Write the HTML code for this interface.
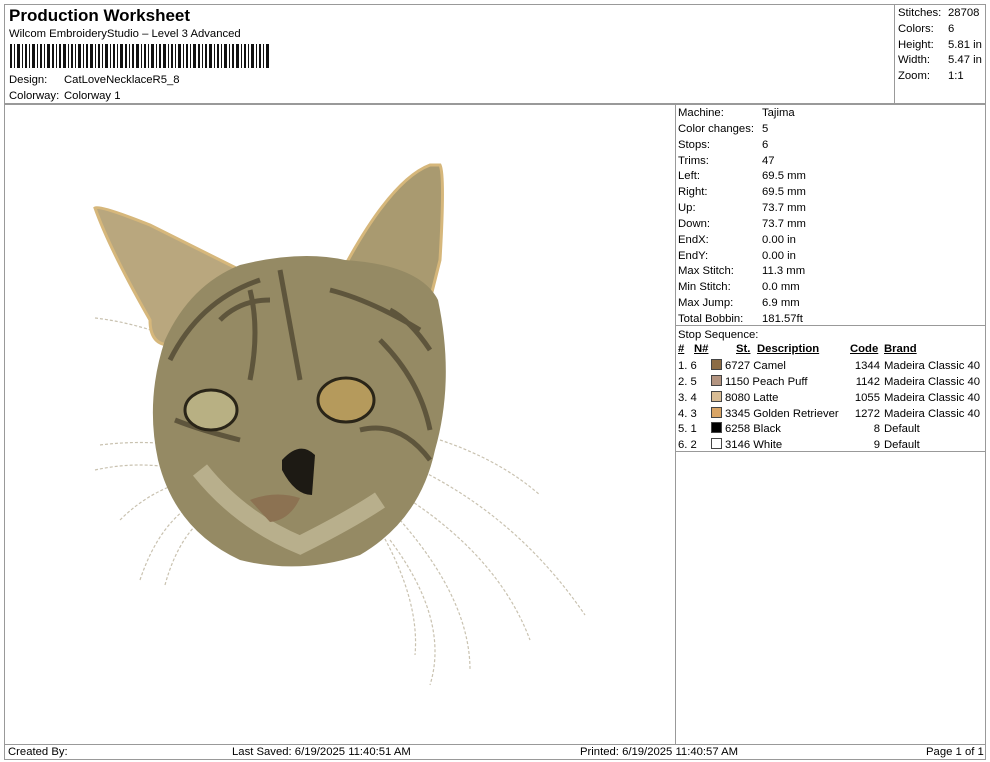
<!DOCTYPE html>
<html><head><meta charset="utf-8"><style>
body{margin:0;width:990px;height:762px;background:#fff;font-family:"Liberation Sans",Arial,sans-serif;font-size:11.3px;color:#000;position:relative;overflow:hidden}
.a{position:absolute;white-space:nowrap}
.l{position:absolute;background:#999}
.sw{display:inline-block;width:9px;height:9px;border:1px solid #444;vertical-align:-1px;margin-right:3px}
</style></head><body>
<div class="l" style="left:4px;top:4px;width:982px;height:1px"></div>
<div class="l" style="left:4px;top:4px;width:1px;height:756px"></div>
<div class="l" style="left:985px;top:4px;width:1px;height:756px"></div>
<div class="l" style="left:4px;top:759px;width:982px;height:1px"></div>
<div class="l" style="left:4px;top:103px;width:982px;height:2px"></div>
<div class="l" style="left:894px;top:4px;width:1px;height:100px"></div>
<div class="l" style="left:675px;top:104px;width:1px;height:640px"></div>
<div class="l" style="left:675px;top:325px;width:311px;height:1px"></div>
<div class="l" style="left:675px;top:451px;width:311px;height:1px"></div>
<div class="l" style="left:4px;top:744px;width:982px;height:1px"></div>

<div class="a" style="left:9px;top:6px;font-size:17px;font-weight:bold">Production Worksheet</div>
<div class="a" style="left:9px;top:28px">Wilcom EmbroideryStudio – Level 3 Advanced</div>
<svg class="a" style="left:10px;top:44px" width="260" height="24">
<g fill="#111">
<rect x="0" width="2" height="24"/><rect x="4" width="1" height="24"/><rect x="7" width="3" height="24"/><rect x="12" width="1" height="24"/><rect x="15" width="2" height="24"/><rect x="19" width="1" height="24"/><rect x="22" width="3" height="24"/><rect x="27" width="1" height="24"/><rect x="30" width="2" height="24"/><rect x="34" width="1" height="24"/><rect x="37" width="3" height="24"/><rect x="42" width="2" height="24"/><rect x="46" width="1" height="24"/><rect x="49" width="2" height="24"/><rect x="53" width="3" height="24"/><rect x="58" width="1" height="24"/><rect x="61" width="2" height="24"/><rect x="65" width="1" height="24"/><rect x="68" width="3" height="24"/><rect x="73" width="1" height="24"/><rect x="76" width="2" height="24"/><rect x="80" width="3" height="24"/><rect x="85" width="1" height="24"/><rect x="88" width="2" height="24"/><rect x="92" width="1" height="24"/><rect x="95" width="3" height="24"/><rect x="100" width="1" height="24"/><rect x="103" width="2" height="24"/><rect x="107" width="1" height="24"/><rect x="110" width="3" height="24"/><rect x="115" width="2" height="24"/><rect x="119" width="1" height="24"/><rect x="122" width="2" height="24"/><rect x="126" width="3" height="24"/><rect x="131" width="1" height="24"/><rect x="134" width="2" height="24"/><rect x="138" width="1" height="24"/><rect x="141" width="3" height="24"/><rect x="146" width="1" height="24"/><rect x="149" width="2" height="24"/><rect x="153" width="3" height="24"/><rect x="158" width="1" height="24"/><rect x="161" width="2" height="24"/><rect x="165" width="1" height="24"/><rect x="168" width="3" height="24"/><rect x="173" width="1" height="24"/><rect x="176" width="2" height="24"/><rect x="180" width="1" height="24"/><rect x="183" width="3" height="24"/><rect x="188" width="2" height="24"/><rect x="192" width="1" height="24"/><rect x="195" width="2" height="24"/><rect x="199" width="3" height="24"/><rect x="204" width="1" height="24"/><rect x="207" width="2" height="24"/><rect x="211" width="1" height="24"/><rect x="214" width="3" height="24"/><rect x="219" width="1" height="24"/><rect x="222" width="2" height="24"/><rect x="226" width="3" height="24"/><rect x="231" width="1" height="24"/><rect x="234" width="2" height="24"/><rect x="238" width="1" height="24"/><rect x="241" width="3" height="24"/><rect x="246" width="1" height="24"/><rect x="249" width="2" height="24"/><rect x="253" width="1" height="24"/><rect x="256" width="3" height="24"/>
</g></svg>
<div class="a" style="left:9px;top:74px">Design:</div><div class="a" style="left:64px;top:74px">CatLoveNecklaceR5_8</div>
<div class="a" style="left:9px;top:90px">Colorway:</div><div class="a" style="left:64px;top:90px">Colorway 1</div>

<div class="a" style="left:898px;top:6px;line-height:15.8px">Stitches:<br>Colors:<br>Height:<br>Width:<br>Zoom:</div>
<div class="a" style="left:948px;top:6px;line-height:15.8px">28708<br>6<br>5.81 in<br>5.47 in<br>1:1</div>

<div class="a" style="left:678px;top:106px;line-height:15.85px">Machine:<br>Color changes:<br>Stops:<br>Trims:<br>Left:<br>Right:<br>Up:<br>Down:<br>EndX:<br>EndY:<br>Max Stitch:<br>Min Stitch:<br>Max Jump:<br>Total Bobbin:<br>Stop Sequence:</div>
<div class="a" style="left:762px;top:106px;line-height:15.85px">Tajima<br>5<br>6<br>47<br>69.5 mm<br>69.5 mm<br>73.7 mm<br>73.7 mm<br>0.00 in<br>0.00 in<br>11.3 mm<br>0.0 mm<br>6.9 mm<br>181.57ft</div>

<div class="a" style="left:678px;top:343px;font-weight:bold;text-decoration:underline">#</div>
<div class="a" style="left:694px;top:343px;font-weight:bold;text-decoration:underline">N#</div>
<div class="a" style="left:736px;top:343px;font-weight:bold;text-decoration:underline">St.</div>
<div class="a" style="left:757px;top:343px;font-weight:bold;text-decoration:underline">Description</div>
<div class="a" style="left:850px;top:343px;font-weight:bold;text-decoration:underline">Code</div>
<div class="a" style="left:884px;top:343px;font-weight:bold;text-decoration:underline">Brand</div>
<div class="a" style="left:678px;top:359px;line-height:15.85px">1. 6<br>2. 5<br>3. 4<br>4. 3<br>5. 1<br>6. 2</div>
<div class="a" style="left:711px;top:359px;line-height:15.85px">
<span class="sw" style="background:#8c6c45"></span>6727 Camel<br>
<span class="sw" style="background:#b39480"></span>1150 Peach Puff<br>
<span class="sw" style="background:#d8bc94"></span>8080 Latte<br>
<span class="sw" style="background:#d9a566"></span>3345 Golden Retriever<br>
<span class="sw" style="background:#000"></span>6258 Black<br>
<span class="sw" style="background:#fff"></span>3146 White</div>
<div class="a" style="left:840px;top:359px;width:40px;text-align:right;line-height:15.85px">1344<br>1142<br>1055<br>1272<br>8<br>9</div>
<div class="a" style="left:884px;top:359px;line-height:15.85px">Madeira Classic 40<br>Madeira Classic 40<br>Madeira Classic 40<br>Madeira Classic 40<br>Default<br>Default</div>

<div class="a" style="left:8px;top:746px">Created By:</div>
<div class="a" style="left:232px;top:746px">Last Saved: 6/19/2025 11:40:51 AM</div>
<div class="a" style="left:580px;top:746px">Printed: 6/19/2025 11:40:57 AM</div>
<div class="a" style="left:926px;top:746px">Page 1 of 1</div>

<svg class="a" style="left:0;top:0" width="670" height="740">
<g fill="none" stroke="#c9c2b0" stroke-width="1.2" stroke-dasharray="3 2">
<path d="M95 318 Q130 322 165 335"/><path d="M100 445 Q140 440 180 445"/><path d="M95 470 Q140 460 185 470"/>
<path d="M120 520 Q150 490 190 480"/><path d="M140 580 Q160 520 200 500"/><path d="M165 585 Q180 530 215 510"/>
<path d="M440 440 Q500 460 540 495"/><path d="M420 470 Q520 520 585 615"/><path d="M410 500 Q500 560 530 640"/>
<path d="M400 520 Q470 600 470 670"/><path d="M390 540 Q450 620 430 685"/><path d="M380 530 Q420 600 415 655"/>
</g>
<path d="M95 208 Q100 205 150 225 L240 270 L170 345 Q150 345 150 320 Q110 250 95 208Z" fill="#b9a77e" stroke="#d6b77b" stroke-width="3"/>
<path d="M440 165 Q445 175 440 260 L430 300 L340 275 Q390 180 430 165Z" fill="#a99a70" stroke="#d6b77b" stroke-width="3"/>
<path d="M240 265 Q300 250 345 260 Q420 265 438 300 Q455 380 435 450 Q420 520 360 555 Q300 575 240 560 Q175 530 158 460 Q145 400 165 340 Q190 285 240 265Z" fill="#958a64"/>
<path d="M170 360 Q200 300 260 280 M280 270 L300 380 M330 290 Q370 300 420 330 M380 340 Q420 380 430 430 M175 420 Q200 430 240 440 M360 430 Q400 420 430 460 M250 290 Q260 330 250 380 M220 320 Q240 300 270 300 M390 310 Q410 320 430 350" stroke="#3a3222" stroke-width="5" fill="none" opacity=".6"/>
<path d="M200 470 Q240 520 300 545 Q350 520 380 500" stroke="#d0c8a6" stroke-width="18" fill="none" opacity=".6"/>
<ellipse cx="211" cy="410" rx="26" ry="20" fill="#b8b083" stroke="#2a2518" stroke-width="3"/>
<ellipse cx="346" cy="400" rx="28" ry="22" fill="#b59a5c" stroke="#2a2518" stroke-width="3"/>
<path d="M282 460 Q300 440 315 455 L312 495 Q295 495 282 470Z" fill="#1d1a14"/>
<path d="M250 500 Q275 490 300 498 Q290 520 270 522Z" fill="#8c7252"/>
</svg>
</body></html>
